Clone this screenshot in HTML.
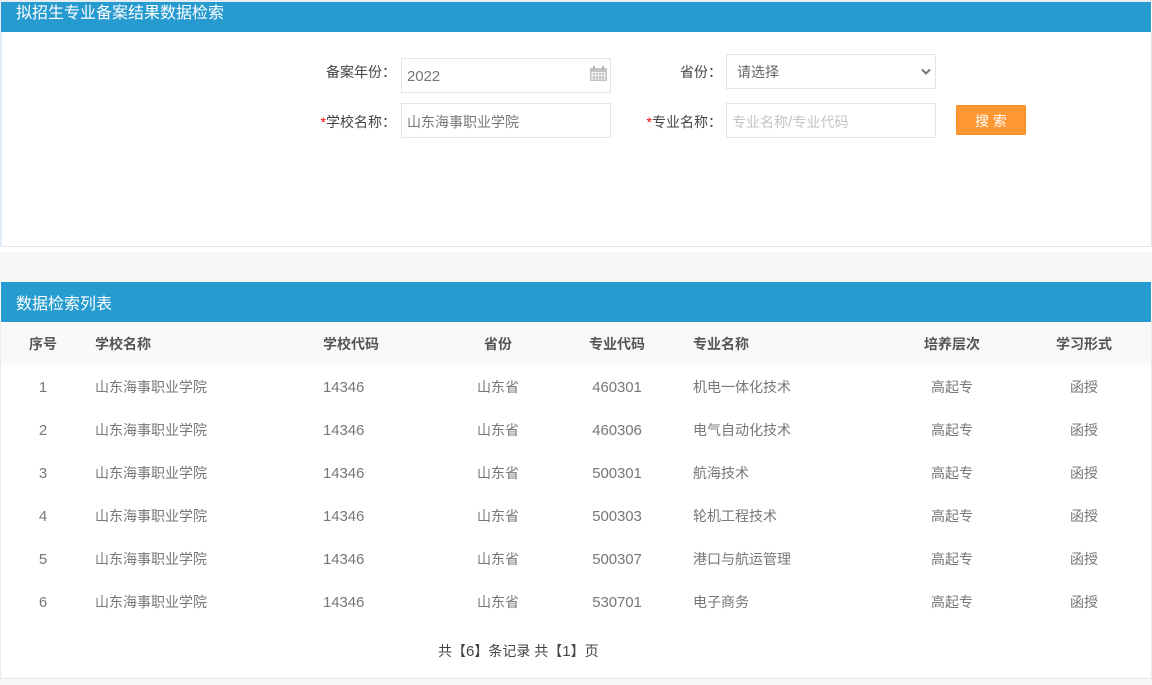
<!DOCTYPE html>
<html lang="zh-CN"><head><meta charset="utf-8"><title>拟招生专业备案结果数据检索</title>
<style>
html,body{margin:0;padding:0;width:1152px;height:685px;overflow:hidden;background:#fff}
body{position:relative;font-family:"Liberation Sans","Noto Sans CJK SC",sans-serif;font-size:14px;color:#777}
.a{position:absolute;white-space:nowrap}
.t{line-height:20px;height:20px}
.c{text-align:center;transform:translateX(-50%)}
.b{color:#555;font-weight:700}
.l{color:#444;text-align:right}
.r{color:#f00}
.i{position:absolute;box-sizing:border-box;border:1px solid #e5e5e5;background:#fff;line-height:35px}
.n{font-size:15px;letter-spacing:-.1px}
.t.n{line-height:22px}
</style></head><body>
<div class="a" style="left:0;top:0;width:1152px;height:2px;background:#e4edf3"></div>
<div class="a" style="left:0;top:2px;width:2px;height:244px;background:#e3edf8"></div>
<div class="a" style="left:1px;top:2px;width:1150px;height:30px;background:#269bcf"></div>
<div class="a" style="left:1151px;top:32px;width:1px;height:215px;background:#e5e5e5"></div>
<div class="a" style="left:1px;top:246px;width:1151px;height:1px;background:#e5e5e5"></div>
<div class="a" style="left:16px;top:1px;color:#fff;font-size:16px;line-height:24px;padding-top:1px">拟招生专业备案结果数据检索</div>

<div class="a t l" style="right:756px;top:62px">备案年份：</div>
<div class="i" style="left:401px;top:58px;width:210px;height:35px;padding-left:5px;color:#777;line-height:34px"><span class="n">2022</span></div>
<svg class="a" style="left:590px;top:66px" width="17" height="15" viewBox="0 0 17 15"><path d="M0 2h17v13H0z" fill="#c4c4c4"/><path d="M3 0h2v4H3zM12 0h2v4h-2z" fill="#b5b5b5"/><path d="M1.500 6h14v7.500h-14z" fill="#f2f2f2"/><path d="M3 7h2v2H3zM6 7h2v2H6zM9 7h2v2H9zM12 7h2v2h-2zM3 10h2v3H3zM6 10h2v3H6zM9 10h2v3H9zM12 10h2v3h-2z" fill="#c0c0c0"/></svg>
<div class="a t l" style="right:430px;top:62px">省份：</div>
<div class="i" style="left:726px;top:54px;width:210px;height:35px;padding-left:10px;color:#666;line-height:34px">请选择</div>
<svg class="a" style="left:921px;top:68px" width="10" height="8" viewBox="0 0 10 8"><path d="M1 1.500l4 4 4-4" fill="none" stroke="#777" stroke-width="2"/></svg>

<div class="a t l" style="right:756px;top:112px"><span class="r">*</span>学校名称：</div>
<div class="i" style="left:401px;top:103px;width:210px;height:35px;padding-left:5px;color:#777;line-height:36px">山东海事职业学院</div>
<div class="a t l" style="right:430px;top:112px"><span class="r">*</span>专业名称：</div>
<div class="i" style="left:726px;top:103px;width:210px;height:35px;padding-left:5px;color:#c4c4c4;line-height:36px">专业名称<span style="font-size:16px">/</span>专业代码</div>
<div class="a" style="left:956px;top:105px;width:70px;height:30px;box-sizing:border-box;background:#ff9733;border:1px solid #f58a20;border-radius:2px;color:#fff;text-align:center;line-height:30px">搜 索</div>

<div class="a" style="left:0;top:252px;width:1152px;height:433px;background:#f7f7f7"></div>
<div class="a" style="left:1px;top:282px;width:1150px;height:40px;background:#269bcf"></div>
<div class="a" style="left:16px;top:293px;color:#fff;font-size:16px;line-height:24px">数据检索列表</div>
<div class="a" style="left:1px;top:322px;width:1150px;height:356px;background:#fff"></div>
<div class="a" style="left:1px;top:322px;width:1150px;height:43px;background:#f9f9f9"></div>
<div class="a" style="left:0;top:322px;width:1px;height:357px;background:#ececec"></div>
<div class="a" style="left:1151px;top:322px;width:1px;height:357px;background:#ececec"></div>
<div class="a" style="left:0;top:678px;width:1152px;height:1px;background:#e5e5e5"></div>

<div class="a t b c" style="left:43px;top:334px">序号</div>
<div class="a t b" style="left:95px;top:334px">学校名称</div>
<div class="a t b" style="left:323px;top:334px">学校代码</div>
<div class="a t b c" style="left:498px;top:334px">省份</div>
<div class="a t b c" style="left:617px;top:334px">专业代码</div>
<div class="a t b" style="left:693px;top:334px">专业名称</div>
<div class="a t b c" style="left:952px;top:334px">培养层次</div>
<div class="a t b c" style="left:1084px;top:334px">学习形式</div>

<div class="a t c n" style="left:43px;top:377px">1</div><div class="a t" style="left:95px;top:377px">山东海事职业学院</div><div class="a t n" style="left:323px;top:377px">14346</div><div class="a t c" style="left:498px;top:377px">山东省</div><div class="a t c n" style="left:617px;top:377px">460301</div><div class="a t" style="left:693px;top:377px">机电一体化技术</div><div class="a t c" style="left:952px;top:377px">高起专</div><div class="a t c" style="left:1084px;top:377px">函授</div>
<div class="a t c n" style="left:43px;top:420px">2</div><div class="a t" style="left:95px;top:420px">山东海事职业学院</div><div class="a t n" style="left:323px;top:420px">14346</div><div class="a t c" style="left:498px;top:420px">山东省</div><div class="a t c n" style="left:617px;top:420px">460306</div><div class="a t" style="left:693px;top:420px">电气自动化技术</div><div class="a t c" style="left:952px;top:420px">高起专</div><div class="a t c" style="left:1084px;top:420px">函授</div>
<div class="a t c n" style="left:43px;top:463px">3</div><div class="a t" style="left:95px;top:463px">山东海事职业学院</div><div class="a t n" style="left:323px;top:463px">14346</div><div class="a t c" style="left:498px;top:463px">山东省</div><div class="a t c n" style="left:617px;top:463px">500301</div><div class="a t" style="left:693px;top:463px">航海技术</div><div class="a t c" style="left:952px;top:463px">高起专</div><div class="a t c" style="left:1084px;top:463px">函授</div>
<div class="a t c n" style="left:43px;top:506px">4</div><div class="a t" style="left:95px;top:506px">山东海事职业学院</div><div class="a t n" style="left:323px;top:506px">14346</div><div class="a t c" style="left:498px;top:506px">山东省</div><div class="a t c n" style="left:617px;top:506px">500303</div><div class="a t" style="left:693px;top:506px">轮机工程技术</div><div class="a t c" style="left:952px;top:506px">高起专</div><div class="a t c" style="left:1084px;top:506px">函授</div>
<div class="a t c n" style="left:43px;top:549px">5</div><div class="a t" style="left:95px;top:549px">山东海事职业学院</div><div class="a t n" style="left:323px;top:549px">14346</div><div class="a t c" style="left:498px;top:549px">山东省</div><div class="a t c n" style="left:617px;top:549px">500307</div><div class="a t" style="left:693px;top:549px">港口与航运管理</div><div class="a t c" style="left:952px;top:549px">高起专</div><div class="a t c" style="left:1084px;top:549px">函授</div>
<div class="a t c n" style="left:43px;top:592px">6</div><div class="a t" style="left:95px;top:592px">山东海事职业学院</div><div class="a t n" style="left:323px;top:592px">14346</div><div class="a t c" style="left:498px;top:592px">山东省</div><div class="a t c n" style="left:617px;top:592px">530701</div><div class="a t" style="left:693px;top:592px">电子商务</div><div class="a t c" style="left:952px;top:592px">高起专</div><div class="a t c" style="left:1084px;top:592px">函授</div>

<div class="a t" style="left:438px;top:641px;color:#444">共【<span style="font-size:15px">6</span>】条记录 共【<span style="font-size:15px">1</span>】页</div>
</body></html>
